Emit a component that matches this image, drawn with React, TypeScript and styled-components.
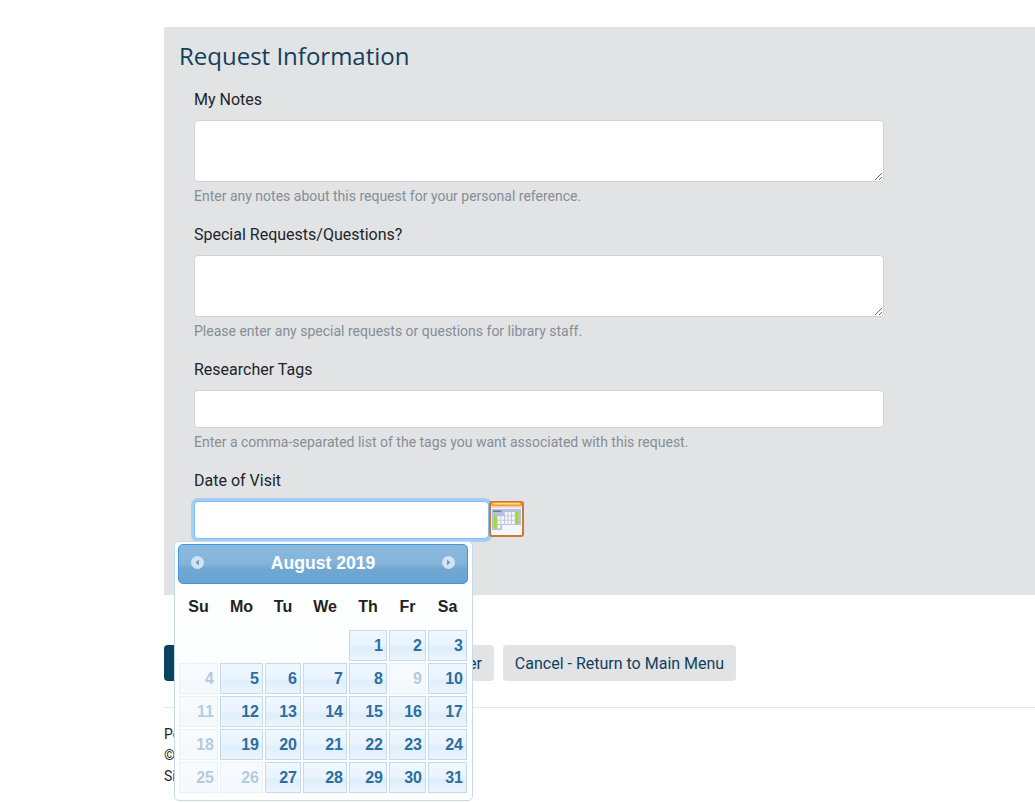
import React from "react";
import styled, { createGlobalStyle } from "styled-components";

const GlobalStyle = createGlobalStyle`
    html, body {
        margin: 0;
        padding: 0;
        background: #fff;
        overflow: hidden;
    }
    * {
        box-sizing: border-box;
    }
`;

interface FieldModel {
    label: string;
    help: string;
    kind: "area" | "text";
}

interface DayModel {
    day: number;
    off?: boolean;
}

const fields: FieldModel[] = [
    {
        label: "My Notes",
        help: "Enter any notes about this request for your personal reference.",
        kind: "area",
    },
    {
        label: "Special Requests/Questions?",
        help: "Please enter any special requests or questions for library staff.",
        kind: "area",
    },
    {
        label: "Researcher Tags",
        help: "Enter a comma-separated list of the tags you want associated with this request.",
        kind: "text",
    },
];

const weekdays = ["Su", "Mo", "Tu", "We", "Th", "Fr", "Sa"];
const offDays = [4, 9, 11, 18, 25, 26];
const days: DayModel[] = Array.from({ length: 31 }, (_, i) => ({
    day: i + 1,
    off: offDays.includes(i + 1),
}));

// calendar grid of the icon: which columns each row fills
const iconRows = [
    { y: 11, from: 3, to: 6 },
    { y: 15.3, from: 0, to: 6 },
    { y: 19.6, from: 0, to: 6 },
    { y: 24, from: 0, to: 1 },
];

const CalendarIcon = () => (
    <svg width="36" height="38" viewBox="0 0 36 38">
        <rect x="1" y="1" width="33" height="34" rx="2" fill="#f6f6f8" stroke="#c97a35" strokeWidth="2" />
        <rect x="2" y="1" width="31" height="4.5" rx="2" fill="#ee9a30" />
        <rect x="4" y="2" width="27" height="1.5" fill="#fcd9a0" />
        <rect x="2" y="5.5" width="31" height="1.5" fill="#e4dccd" />
        <rect x="3" y="8" width="29" height="16" fill="#b4c0de" />
        <rect x="3" y="24" width="10" height="5" fill="#b4c0de" />
        <rect x="4" y="9.5" width="8.5" height="1.5" fill="#6a7aa6" />
        {iconRows.map((row) =>
            [0, 1, 2, 3, 4, 5, 6]
                .filter((col) => col >= row.from && col <= row.to)
                .map((col) => (
                    <rect
                        key={`${row.y}-${col}`}
                        x={5 + col * 3.6}
                        y={row.y}
                        width="2.8"
                        height="3.5"
                        fill={col === 0 || col === 6 ? "#a0e010" : "#f4f6fb"}
                    />
                ))
        )}
    </svg>
);

const NavIcon = ({ flip }: { flip?: boolean }) => (
    <NavSvg width="13" height="13" viewBox="0 0 13 13">
        <circle cx="6.5" cy="6.5" r="6.5" fill="#d3e3f1" />
        <path d={flip ? "M5 3.5 L8.5 6.5 L5 9.5 Z" : "M8 3.5 L4.5 6.5 L8 9.5 Z"} fill="#6f9dc4" />
    </NavSvg>
);

const App = () => {
    return (
        <Page>
            <GlobalStyle />
            <Panel>
                <Heading>Request Information</Heading>
                {fields.map((field) => (
                    <Group key={field.label}>
                        <Label>{field.label}</Label>
                        {field.kind === "area" ? <NotesArea /> : <TextInput />}
                        <Help>{field.help}</Help>
                    </Group>
                ))}
                <Group>
                    <Label>Date of Visit</Label>
                    <DateRow>
                        <DateInput />
                        <CalendarIcon />
                    </DateRow>
                </Group>
            </Panel>
            <Actions>
                <PrimaryButton>Submit Information</PrimaryButton>
                <PlainButton>Save For Later</PlainButton>
                <PlainButton>Cancel - Return to Main Menu</PlainButton>
            </Actions>
            <Divider />
            <Footer>
                <div>Powered by Aeon</div>
                <div>© 2019 Atlas Systems</div>
                <div>Site Feedback</div>
            </Footer>
            <Picker>
                <PickerHeader>
                    <NavIcon />
                    <span>August 2019</span>
                    <NavIcon flip />
                </PickerHeader>
                <DayGrid>
                    {weekdays.map((name) => (
                        <Weekday key={name}>{name}</Weekday>
                    ))}
                    <FirstDaySpacer />
                    {days.map((item) => (
                        <DayCell key={item.day} $off={item.off}>
                            {item.day}
                        </DayCell>
                    ))}
                </DayGrid>
            </Picker>
        </Page>
    );
};

export default App;

const Page = styled.div`
    position: relative;
    height: 803px;
    padding: 27px 0 0 164px;
    overflow: hidden;
    font-family: "Roboto", sans-serif;
    color: #212529;
`;

const Panel = styled.section`
    height: 568px;
    background: #e1e3e5;
    padding-top: 12px;
`;

const Heading = styled.h2`
    margin: 0 0 16px 15px;
    font-family: "Open Sans", sans-serif;
    font-weight: 400;
    font-size: 24px;
    line-height: 33px;
    color: #123f5c;
`;

const Group = styled.div`
    margin: 0 0 16px 30px;
    width: 690px;
`;

const Label = styled.label`
    display: block;
    margin-bottom: 8px;
    font-size: 16px;
    line-height: 24px;
`;

const NotesArea = styled.textarea`
    display: block;
    width: 690px;
    height: 62px;
    background: #fff;
    border: 1px solid #ced4da;
    border-radius: 4px;
    outline: none;
`;

const TextInput = styled.input`
    display: block;
    width: 690px;
    height: 38px;
    background: #fff;
    border: 1px solid #ced4da;
    border-radius: 4px;
    outline: none;
`;

const Help = styled.small`
    display: block;
    margin-top: 4px;
    font-size: 14px;
    line-height: 21px;
    color: #868e96;
`;

const DateRow = styled.div`
    display: flex;
    align-items: flex-start;
`;

const DateInput = styled.input`
    display: block;
    width: 295px;
    height: 38px;
    background: #fff;
    border: 1px solid #80bdff;
    border-radius: 4px;
    box-shadow: 0 0 0 3px #a6cdf3;
    outline: none;
    flex: none;
`;

const Actions = styled.div`
    display: flex;
    gap: 9px;
    margin-top: 50px;
`;

const PlainButton = styled.button`
    height: 36px;
    padding: 0 12px;
    border: none;
    border-radius: 4px;
    background: #e1e3e5;
    font-family: "Roboto", sans-serif;
    font-size: 16px;
    color: #123f5c;
`;

const PrimaryButton = styled(PlainButton)`
    min-width: 195px;
    background: #0b4260;
    color: #fff;
`;

const Divider = styled.hr`
    margin: 26px 0 0;
    border: none;
    border-top: 1px solid #e3e6e9;
`;

const Footer = styled.footer`
    margin-top: 16px;
    font-size: 14px;
    line-height: 21px;
    color: #212529;
`;

const Picker = styled.div`
    position: absolute;
    left: 174px;
    top: 541px;
    width: 299px;
    height: 260px;
    padding: 2px 4px 2px 3px;
    background: #fdfefe;
    border: 1px solid #c5dbec;
    border-radius: 5px;
    font-family: "Liberation Sans", Arial, sans-serif;
`;

const PickerHeader = styled.div`
    display: flex;
    align-items: center;
    justify-content: space-between;
    height: 40px;
    padding: 0 12px 2px;
    border: 1px solid #4297d7;
    border-radius: 5px;
    background: linear-gradient(#8bb9de 0%, #84b4db 48%, #70a8d3 62%, #6aa3d0 100%);
    font-size: 17.6px;
    font-weight: 700;
    color: #fff;
`;

const NavSvg = styled.svg`
    margin-top: -1px;
`;

const DayGrid = styled.div`
    display: grid;
    grid-template-columns: 39px 43px 36px 44px 38px 37px 39px;
    grid-template-rows: 44px;
    grid-auto-rows: 31px;
    gap: 2px;
    margin-left: 1px;
`;

const Weekday = styled.div`
    padding-top: 13px;
    text-align: center;
    font-size: 16px;
    line-height: 20px;
    font-weight: 700;
    color: #222;
`;

const FirstDaySpacer = styled.div`
    grid-column: 1 / span 4;
`;

const DayCell = styled.div<{ $off?: boolean }>`
    padding-right: 3px;
    border: 1px solid #c5dbec;
    background: linear-gradient(#f0f7fe 0%, #e9f4fe 48%, #deeefb 58%, #ecf5fe 100%);
    text-align: right;
    font-size: 16px;
    line-height: 29px;
    font-weight: 700;
    color: #2e6e9e;
    opacity: ${(props) => (props.$off ? 0.35 : 1)};
`;
